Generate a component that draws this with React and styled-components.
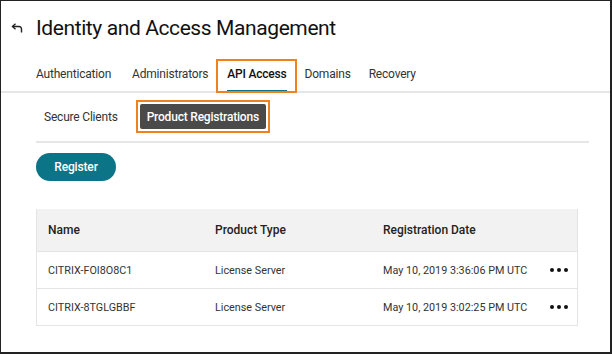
import React from "react";
import styled, { createGlobalStyle } from "styled-components";

const GlobalStyle = createGlobalStyle`
  html, body {
    margin: 0;
    padding: 0;
    background: #fff;
  }
  body {
    font-family: Roboto, "Liberation Sans", Arial, sans-serif;
    color: #333;
  }
`;

const Frame = styled.div`
  width: 612px;
  height: 354px;
  box-sizing: border-box;
  border: 1px solid #222;
  border-right-width: 2px;
  border-bottom-width: 2px;
  overflow: hidden;
  background: #fff;
`;

const Header = styled.div`
  display: flex;
  align-items: center;
  height: 28px;
  padding: 13px 0 0 9px;
`;

const BackButton = styled.button`
  border: 0;
  background: none;
  padding: 0;
  width: 14px;
  height: 14px;
  margin-right: 12px;
  display: flex;
  align-items: center;
  justify-content: center;
  cursor: pointer;
`;

const Title = styled.h1`
  margin: 0;
  font-size: 21px;
  line-height: 28px;
  letter-spacing: -0.4px;
  font-weight: 400;
  color: #111;
`;

const Tabs = styled.nav`
  display: flex;
  padding-left: 35px;
  margin-top: 24px;
  border-bottom: 2px solid #e6e6e9;
`;

const Tab = styled.div`
  position: relative;
  font-size: 12px;
  line-height: 16px;
  letter-spacing: -0.2px;
  color: ${(p) => (p.active ? "#111" : "#333")};
  font-weight: ${(p) => (p.active ? 500 : 400)};
  padding: 0 0 8px;
  margin-right: ${(p) => p.gap}px;
  border-bottom: 3px solid ${(p) => (p.active ? "#0b7486" : "transparent")};
  margin-bottom: -2px;
`;

const Highlight = styled.span`
  position: absolute;
  border: 2px solid #f0821e;
  pointer-events: none;
  top: ${(p) => p.top}px;
  left: ${(p) => p.left}px;
  right: ${(p) => p.right}px;
  bottom: ${(p) => p.bottom}px;
`;

const Content = styled.div`
  padding: 0 21px 0 35px;
`;

const SubTabs = styled.div`
  display: flex;
  align-items: center;
  gap: 22px;
  padding: 11px 0 12px 8px;
  border-bottom: 2px solid #e6e6e9;
`;

const SubTab = styled.div`
  position: relative;
  box-sizing: border-box;
  height: 25px;
  display: flex;
  align-items: center;
  font-size: 12px;
  letter-spacing: -0.2px;
  color: ${(p) => (p.active ? "#fff" : "#333")};
  background: ${(p) => (p.active ? "#4a4a4a" : "transparent")};
  font-weight: ${(p) => (p.active ? 500 : 400)};
  padding: ${(p) => (p.active ? "0 7px" : "0")};
  border-radius: 2px;
`;

const RegisterButton = styled.button`
  display: block;
  margin-top: 10px;
  width: 80px;
  height: 28px;
  border: 0;
  border-radius: 14px;
  background: #0b7486;
  color: #fff;
  font-family: inherit;
  font-size: 12px;
  letter-spacing: -0.15px;
  font-weight: 500;
  cursor: pointer;
`;

const Table = styled.div`
  margin-top: 28px;
  width: 542px;
  border: 1px solid #e4e4e6;
  border-top: 0;
  box-sizing: border-box;
`;

const Row = styled.div`
  display: grid;
  grid-template-columns: 167px 168px 165px 1fr;
  align-items: center;
  height: ${(p) => (p.head ? 42 : 36)}px;
  padding-left: 11px;
  background: ${(p) => (p.head ? "#f2f2f3" : "#fff")};
  border-top: ${(p) => (p.head ? "0" : "1px solid #e4e4e6")};
  font-size: ${(p) => (p.head ? "12px" : "10.8px")};
  font-weight: ${(p) => (p.head ? 500 : 400)};
  color: ${(p) => (p.head ? "#222" : "#333")};
`;

const Dots = styled.div`
  display: flex;
  gap: 3px;
  padding-left: 2px;
  & span {
    width: 4px;
    height: 4px;
    border-radius: 50%;
    background: #111;
  }
`;

const BackIcon = () => (
  <svg width="12" height="11" viewBox="0 0 12 11" fill="none">
    <path d="M1.5 3.5 H8 a2.5 2.5 0 0 1 2.5 2.5 V9.5" stroke="#222" strokeWidth="1.4" />
    <path d="M4.5 0.8 L1.5 3.5 L4.5 6.2" stroke="#222" strokeWidth="1.4" />
  </svg>
);

const tabs = [
  { label: "Authentication", gap: 21 },
  { label: "Administrators", gap: 19 },
  { label: "API Access", gap: 18 },
  { label: "Domains", gap: 18 },
  { label: "Recovery", gap: 0 },
];
tabs[2].active = true;

const rows = [
  { name: "CITRIX-FOI8O8C1", type: "License Server", date: "May 10, 2019 3:36:06 PM UTC" },
  { name: "CITRIX-8TGLGBBF", type: "License Server", date: "May 10, 2019 3:02:25 PM UTC" },
];

export default function App() {
  return (
    <>
      <GlobalStyle />
      <Frame>
        <Header>
          <BackButton aria-label="Back">
            <BackIcon />
          </BackButton>
          <Title>Identity and Access Management</Title>
        </Header>
        <Tabs>
          {tabs.map((t) => (
            <Tab key={t.label} active={t.active} gap={t.gap}>
              {t.label}
              {t.active && <Highlight top={-7} left={-11} right={-10} bottom={-3} />}
            </Tab>
          ))}
        </Tabs>
        <Content>
          <SubTabs>
            <SubTab>Secure Clients</SubTab>
            <SubTab active>
              Product Registrations
              <Highlight top={-4} left={-4} right={-4} bottom={-4} />
            </SubTab>
          </SubTabs>
          <RegisterButton>Register</RegisterButton>
          <Table>
            <Row head>
              <div>Name</div>
              <div>Product Type</div>
              <div>Registration Date</div>
              <div />
            </Row>
            {rows.map((r) => (
              <Row key={r.name}>
                <div>{r.name}</div>
                <div>{r.type}</div>
                <div>{r.date}</div>
                <Dots>
                  <span />
                  <span />
                  <span />
                </Dots>
              </Row>
            ))}
          </Table>
        </Content>
      </Frame>
    </>
  );
}
